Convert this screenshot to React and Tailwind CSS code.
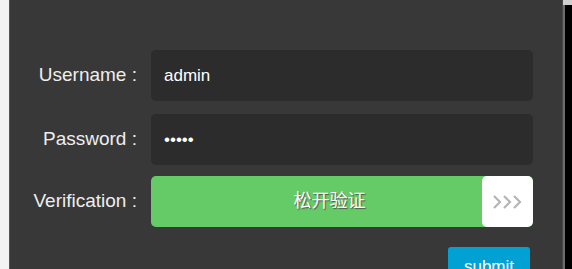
import { useState } from 'react'

function Chevrons() {
  return (
    <svg width="32" height="14" viewBox="0 0 32 14" fill="none" stroke="#b5b5b5" strokeWidth="2.2">
      <path d="M2 1l6 6-6 6" />
      <path d="M12 1l6 6-6 6" />
      <path d="M22 1l6 6-6 6" />
    </svg>
  )
}

function Row({ label, className = '', children }) {
  return (
    <div className={`flex items-center ${className}`}>
      <label className="w-[127px] shrink-0 text-right text-[19px] text-[#eeeeee]">{label}</label>
      <div className="ml-[14px] flex-1">{children}</div>
    </div>
  )
}

export default function App() {
  const [user, setUser] = useState('admin')
  const [pass, setPass] = useState('admin')

  return (
    <div className="flex h-[269px] w-[572px] overflow-hidden font-['Liberation_Sans','Noto_Sans_CJK_SC',sans-serif]">
      <div className="w-[9px] shrink-0 bg-[#f3f3f3]" />
      <div className="w-px shrink-0 bg-[#555555]" />
      <div className="flex flex-1 flex-col gap-[13px] bg-[#383838] pr-[29px] pt-[50px]">
        <Row label="Username :">
          <input
            value={user}
            onChange={(e) => setUser(e.target.value)}
            className="h-[51px] w-full rounded-[5px] bg-[#2c2c2c] px-[13px] text-[17px] text-white outline-none"
          />
        </Row>
        <Row label="Password :">
          <input
            type="password"
            value={pass}
            onChange={(e) => setPass(e.target.value)}
            className="h-[51px] w-full rounded-[5px] bg-[#2c2c2c] px-[13px] text-[17px] text-white outline-none"
          />
        </Row>
        <Row label="Verification :" className="-mt-[2px]">
          <div className="relative flex h-[51px] w-full items-center overflow-hidden rounded-[5px] bg-[#64cb67]">
            <span className="flex-1 pl-[26px] text-center text-[18px] text-white [text-shadow:1px_1px_1px_#555]">
              松开验证
            </span>
            <div className="flex h-[51px] w-[51px] shrink-0 items-center justify-center rounded-[5px] bg-white">
              <Chevrons />
            </div>
          </div>
        </Row>
        <div className="mt-[7px] flex justify-end pr-[3px]">
          <button className="h-[40px] w-[82px] rounded-[3px] bg-[#02a1d4] text-[17px] text-white">submit</button>
        </div>
      </div>
      <div className="w-px shrink-0 bg-[#4a4a4a]" />
      <div className="flex w-[9px] shrink-0 flex-col">
        <div className="h-[5px] bg-[#cfcfcf]" />
        <div className="flex flex-1">
          <div className="w-[2px] bg-[#6b6b6b]" />
          <div className="flex-1 bg-black" />
        </div>
      </div>
    </div>
  )
}
